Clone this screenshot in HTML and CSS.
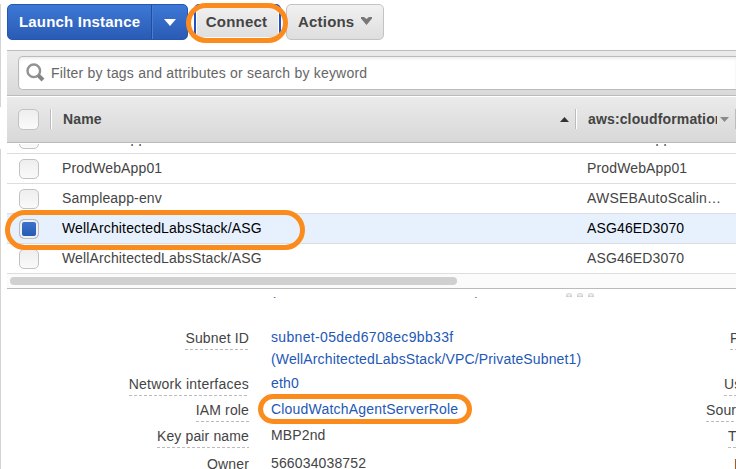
FILE: index.html
```html
<!DOCTYPE html>
<html lang="en">
<head>
<meta charset="utf-8">
<title>EC2 Instances</title>
<link rel="stylesheet" href="styles.css">
</head>
<body>
<div class="edge edge-top"></div>
<div class="edge edge-bottom"></div>
<main class="console">
  <div class="toolbar">
    <div class="launch"><button class="launch-main">Launch Instance</button><button class="launch-drop" aria-label="More"><svg width="12" height="7"><path d="M0 0H12L6 7Z" fill="#fff"/></svg></button></div>
    <button class="button connect">Connect</button>
    <button class="button actions">Actions <svg width="11" height="8" viewBox="0 0 11 8"><path d="M0 0H3L5.5 2L8 0H11V1.5L5.5 8L0 1.5Z" fill="#777"/></svg></button>
  </div>
  <div class="filter">
    <div class="search">
      <svg width="20" height="20" viewBox="0 0 20 20"><circle cx="7.8" cy="7.8" r="6.3" fill="none" stroke="#929292" stroke-width="2.4"/><path d="M12.3 12.3L17 17" stroke="#858585" stroke-width="4"/></svg>
      <span>Filter by tags and attributes or search by keyword</span>
    </div>
  </div>
  <div class="row head">
    <i class="check"></i><i class="sep"></i><span class="name">Name</span>
    <svg class="asc" width="9" height="5"><path d="M0 5L4.5 0L9 5Z" fill="#333"/></svg><i class="sep"></i>
    <span class="stack">aws:cloudformation:stack</span>
    <svg class="desc" width="9" height="5"><path d="M0 0H9L4.5 5Z" fill="#8a8a8a"/></svg><i class="sep"></i>
  </div>
  <div class="rows">
    <div class="row"><i class="check"></i><span class="name">ProdWebApp01</span><span>ProdWebApp01</span></div>
    <div class="row"><i class="check"></i><span class="name">ProdWebApp01</span><span>ProdWebApp01</span></div>
    <div class="row"><i class="check"></i><span class="name">Sampleapp-env</span><span class="wide">AWSEBAutoScalin…</span></div>
    <div class="row selected"><i class="check"></i><span class="name">WellArchitectedLabsStack/ASG</span><span>ASG46ED3070</span></div>
    <div class="row"><i class="check"></i><span class="name">WellArchitectedLabsStack/ASG</span><span>ASG46ED3070</span></div>
  </div>
  <div class="scroll"><div class="thumb"></div></div>
  <div class="grip"><i></i><i></i><i></i></div>
  <div class="details">
    <div class="detail clipped"><b></b><a>(WellArchitectedLabsStack/VPC)</a></div>
    <div class="detail subnet"><b><u>Subnet ID</u></b><a><span class="subnet-id">subnet-05ded6708ec9bb33f</span><br>(WellArchitectedLabsStack/VPC/PrivateSubnet1)</a><b class="right"><u>Private DNS</u></b></div>
    <div class="detail"><b><u class="interfaces">Network interfaces</u></b><a>eth0</a><b class="right r2"><u>Usage</u></b></div>
    <div class="detail"><b><u>IAM role</u></b><a class="role">CloudWatchAgentServerRole</a><b class="right r3"><u>Source</u></b></div>
    <div class="detail owner-gap"><b><u>Key pair name</u></b><a class="plain">MBP2nd</a><b class="right r4"><u>T2</u></b></div>
    <div class="detail"><b><u>Owner</u></b><a class="plain">566034038752</a><b class="right r5"><u>EBS</u></b></div>
  </div>
</main>
<div class="ring ring-connect"></div>
<div class="ring ring-row"></div>
<div class="ring ring-role"></div>
</body>
</html>
```
FILE: styles.css
```css
* { box-sizing: border-box; }
body { margin: 0; width: 736px; height: 469px; overflow: hidden; position: relative; background: #fff; color: #444; font: 14px/20px "Liberation Sans", Arial, sans-serif; letter-spacing: .14px; }
.edge { position: absolute; left: 0; width: 1px; background: #d4d4d4; }
.edge-top { top: 4px; height: 103px; }
.edge-bottom { top: 149px; bottom: 0; }
.console { margin-left: 7px; width: 729px; height: 469px; overflow: hidden; }
svg { display: block; flex: none; }
button { font: bold 15px/20px "Liberation Sans", Arial, sans-serif; letter-spacing: .2px; padding: 0; }
.toolbar { display: flex; height: 50px; padding-top: 4px; }
.launch { display: flex; width: 181px; height: 36px; border: 1px solid #2457ae; border-radius: 5px; overflow: hidden; background: linear-gradient(#3d78d6, #2a5bb4); }
.launch button { border: 0; background: none; color: #fff; }
.launch-main { width: 144px; padding-bottom: 1px; }
.launch .launch-drop { width: 36px; border-left: 1px solid #204e9d; box-shadow: inset 1px 0 #4a7dd0; display: flex; align-items: center; justify-content: center; }
.button { height: 36px; border: 1px solid #c3c3c3; border-radius: 5px; background: linear-gradient(#f1f1f1, #dedede); color: #444; white-space: nowrap; }
.connect { width: 87px; margin-left: 6px; padding-right: 2px; border: 2px solid #274fc4; box-shadow: inset 0 0 0 1px #fff; letter-spacing: .2px; }
.actions { width: 98px; margin-left: 5px; display: flex; align-items: center; padding-left: 11px; gap: 7px; }
.actions svg { margin-top: -3px; }
.filter { height: 45px; border-top: 1px solid #bdbdbd; background: linear-gradient(#ebebeb, #d9d9d9); padding: 5px 0 0 11px; }
.search { display: flex; align-items: center; height: 34px; border: 1px solid #bbb; border-right: 0; border-radius: 5px 0 0 5px; background: #fff; box-shadow: inset 0 2px 3px #eee; padding-left: 7px; gap: 5px; color: #666; letter-spacing: .21px; }
.row { display: flex; align-items: center; height: 30px; border-bottom: 1px solid #ddd; padding-left: 12px; white-space: nowrap; }
.row .name { width: 525px; flex: none; }
.row .wide { letter-spacing: .2px; }
.rows .row span { padding-bottom: 2px; }
.check { flex: none; width: 20px; height: 20px; margin-right: 23px; border: 1px solid #c2c2c2; border-radius: 5px; background: linear-gradient(#eee, #fafafa); }
.head { height: 48px; padding-left: 11px; border-top: 1px solid #bbb; border-bottom-color: #bbb; background: linear-gradient(#ebebeb, #d8d8d8); box-shadow: inset 0 1px #fff; font-weight: bold; }
.head .check { width: 21px; height: 21px; margin-right: 11px; }
.sep { flex: none; width: 2px; height: 20px; border-left: 1px solid #bcbcbc; border-right: 1px solid #fff; }
.head .name { width: 497px; margin-left: 11px; }
.asc { margin-right: 6px; }
.stack { width: 129px; flex: none; margin-left: 11px; overflow: hidden; }
.desc { margin: 0 6px 0 3px; }
.rows { height: 130px; margin-top: 1px; overflow: hidden; display: flex; flex-direction: column; justify-content: flex-end; }
.rows .row { flex: none; }
.selected { background: #e7f1fe; color: #000; }
.selected .check { border-color: #bbb; background: linear-gradient(#3d76d2, #2458ae); box-shadow: inset 0 0 0 2px #f0f0f0; }
.scroll { height: 15px; padding: 3px; border-bottom: 1px solid #bbb; background: #fbfbfb; }
.thumb { width: 447px; height: 8px; border-radius: 4px; background: #d0d0d0; }
.grip { display: flex; gap: 5px; height: 8px; padding: 4px 0 0 559px; }
.grip i { width: 6px; height: 4px; border-radius: 3px 3px 0 0; background: radial-gradient(#eee 20%, #bbb); }
.details { white-space: nowrap; line-height: 22px; }
.detail { display: flex; height: 26px; }
.detail b { width: 242px; flex: none; font-weight: normal; text-align: right; }
.detail u { display: inline-block; height: 23px; text-decoration: none; background: repeating-linear-gradient(90deg, #bbb 0 3px, transparent 3px 5px) bottom / 100% 1px no-repeat; }
.detail a { width: 300px; flex: none; margin: -1px 0 0 22px; color: #2358b5; }
.detail .plain { color: #444; }
.subnet-id { letter-spacing: .34px; }
.interfaces { letter-spacing: .24px; }
.role { letter-spacing: .2px; }
.detail .right { width: auto; text-align: left; margin-left: 159px; }
.detail .r2 { margin-left: 153px; }
.detail .r3 { margin-left: 135px; }
.detail .r4 { margin-left: 157px; }
.detail .r5 { margin-left: 163px; }
.clipped { height: 30px; overflow: hidden; }
.clipped a { margin-top: -18px; }
.subnet { height: 46px; }
.owner-gap { height: 28px; }
.ring { position: absolute; border: 5px solid #fb8b1c; border-radius: 20px; }
.ring-connect { left: 186px; top: 3px; width: 102px; height: 40px; }
.ring-row { left: 5px; top: 210px; width: 300px; height: 40px; }
.ring-role { left: 258px; top: 394px; width: 214px; height: 30px; }
```
